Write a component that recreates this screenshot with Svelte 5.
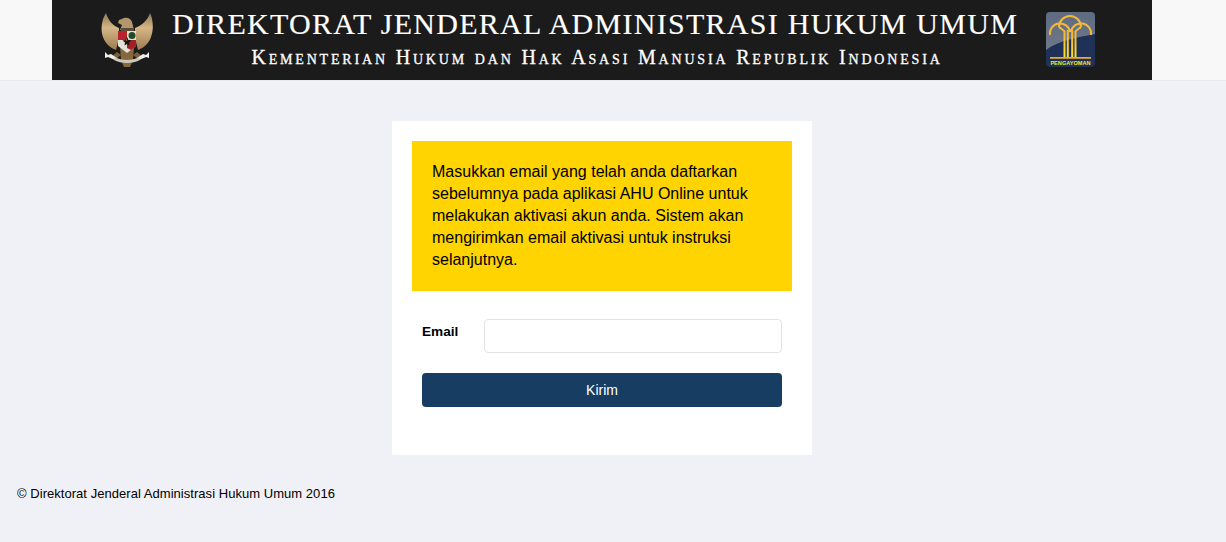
<script>
  let email = $state('');
</script>

<header class="topbar">
  <div class="banner">
    <svg class="garuda" viewBox="0 0 52 58" aria-hidden="true">
      <defs>
        <linearGradient id="wing" x1="0" y1="0" x2="0" y2="1">
          <stop offset="0" stop-color="#8a7452" />
          <stop offset="0.4" stop-color="#d6b686" />
          <stop offset="1" stop-color="#9c7c50" />
        </linearGradient>
      </defs>
      <path d="M5 2C1 8-1 18 2 26c2 6 7 11 13 13l3-12V17C12 15 7 9 5 2z" fill="url(#wing)" />
      <path d="M49 2c3 6 4 16 1 24-2 6-7 11-13 13l-3-12V17c6-2 13-8 15-15z" fill="url(#wing)" />
      <path d="M18 9l5-2c4-1 7 1 8 4l2 8H19l2-5-4-2z" fill="#b3976c" />
      <path d="M20 17h13v5H20z" fill="#5b4c39" />
      <path d="M19 36h14l-1 13-3 7h-6l-3-7z" fill="#85683d" />
      <path d="M16 41l-6 5 5 2 5-4zM36 41l6 5-5 2-5-4z" fill="#7a5f3a" />
      <path d="M17 20h18v15l-9 7-9-7z" fill="#e6e1d8" />
      <path d="M17 20h9v9h-9z" fill="#b8222a" />
      <path d="M26 29h9v6l-5 4-4-2z" fill="#a81d24" />
      <circle cx="31" cy="24.500" r="3.500" fill="#1f4d2c" />
      <path d="M26 26l1.500 3 3 .5-2.500 2 .5 3-2.500-1.500-2.500 1.500.5-3-2.500-2 3-.5z" fill="#1a1510" />
      <path d="M25.500 28l.8 1.600h-1.600z" fill="#e4c24a" />
      <path d="M4 41l3 3 3-1 6 4-2 2-7-3-3 1zM48 41l-3 3-3-1-6 4 2 2 7-3 3 1z" fill="#f2efe8" />
      <path d="M14 46c6 4 18 4 24 0l1 3c-7 4-19 4-26 0z" fill="#cfc8ba" />
    </svg>

    <div class="titles">
      <div class="title">DIREKTORAT JENDERAL ADMINISTRASI HUKUM UMUM</div>
      <div class="subtitle">Kementerian Hukum dan Hak Asasi Manusia Republik Indonesia</div>
    </div>

    <div class="badge">
      <svg viewBox="0 0 49 55" aria-hidden="true">
        <defs>
          <linearGradient id="gold" x1="0" y1="0" x2="0" y2="1">
            <stop offset="0" stop-color="#f2b23a" />
            <stop offset="1" stop-color="#fde22a" />
          </linearGradient>
          <linearGradient id="sheen" x1="0" y1="0" x2="0" y2="1">
            <stop offset="0" stop-color="#5e6b80" />
            <stop offset="1" stop-color="#6f7888" />
          </linearGradient>
        </defs>
        <rect width="49" height="55" rx="4" fill="#1f3156" />
        <path d="M4 0h41a4 4 0 0 1 4 4v18C34 25 13 28 0 38V4a4 4 0 0 1 4-4z" fill="url(#sheen)" />
        <g fill="none" stroke="#f4b93a" stroke-width="2">
          <path d="M13 15a11 11 0 0 1 22 0" />
          <path d="M4 23a10 10 0 0 1 20-3M45 23a10 10 0 0 0-20-3" />
          <path d="M13 15c2 2 4 2 6 5M35 15c-2 2-4 2-6 5" />
        </g>
        <path d="M17.500 20h2v25h-2zM20.800 18h2v27h-2zM25.200 18h2v27h-2zM28.500 20h2v25h-2z" fill="url(#gold)" />
        <path d="M4 45h41v1.800H4z" fill="#f3a92f" />
        <text class="badge-label" x="24.500" y="52.500" text-anchor="middle">PENGAYOMAN</text>
      </svg>
    </div>
  </div>
</header>

<main class="page">
  <section class="card">
    <div class="notice">
      Masukkan email yang telah anda daftarkan sebelumnya pada aplikasi AHU Online untuk melakukan aktivasi akun anda. Sistem akan mengirimkan email aktivasi untuk instruksi selanjutnya.
    </div>

    <form class="form" onsubmit={(e) => e.preventDefault()}>
      <div class="field">
        <label for="email">Email</label>
        <input id="email" type="email" bind:value={email} />
      </div>
      <button type="submit">Kirim</button>
    </form>
  </section>
</main>

<footer class="footer">© Direktorat Jenderal Administrasi Hukum Umum 2016</footer>

<style>
  :global(body) {
    background: #f0f1f7;
    color: #000;
    font-family: "Liberation Sans", Arial, sans-serif;
    font-size: 14px;
  }

  .topbar {
    background: #f8f8f8;
    border-bottom: 1px solid #e9eaee;
  }

  .banner {
    box-sizing: border-box;
    width: 1100px;
    height: 80px;
    margin-left: 52px;
    padding: 12px 57px 0 49px;
    background: #1b1b1b;
    display: flex;
    align-items: flex-start;
  }

  .garuda {
    width: 52px;
    height: 58px;
    flex: none;
    margin-top: -1px;
  }

  .titles {
    flex: 1;
    min-width: 0;
    margin-top: -6px;
    padding-right: 9px;
    color: #fff;
    font-family: "Liberation Serif", serif;
    text-align: center;
    white-space: nowrap;
  }

  .title {
    font-size: 30px;
    line-height: 36px;
    letter-spacing: 1.28px;
    -webkit-text-stroke: 0.15px #fff;
  }

  .subtitle {
    margin-top: 4px;
    padding-left: 4px;
    font-size: 20px;
    line-height: 22px;
    font-variant: small-caps;
    letter-spacing: 2.82px;
    -webkit-text-stroke: 0.3px #fff;
  }

  .badge {
    flex: none;
    width: 49px;
    height: 55px;
  }

  .badge svg {
    display: block;
    width: 49px;
    height: 55px;
  }

  .badge-label {
    font-family: "Liberation Sans", Arial, sans-serif;
    font-size: 5.600px;
    font-weight: bold;
    fill: #f5e82a;
  }

  .page {
    display: flex;
    justify-content: center;
    padding: 40px 22px 0 0;
  }

  .card {
    box-sizing: border-box;
    width: 420px;
    height: 334px;
    padding: 20px;
    background: #fff;
  }

  .notice {
    box-sizing: border-box;
    height: 150px;
    padding: 20px;
    background: #ffd400;
    font-size: 16px;
    line-height: 22px;
  }

  .form {
    padding: 28px 10px 0;
  }

  .field {
    display: flex;
    justify-content: space-between;
    align-items: flex-start;
    margin-bottom: 20px;
  }

  label {
    font-size: 13.600px;
    font-weight: bold;
    line-height: 25px;
  }

  input {
    box-sizing: border-box;
    width: 298px;
    height: 34px;
    padding: 6px 12px;
    background: #fff;
    border: 1px solid #e3e3e6;
    border-radius: 4px;
    outline: none;
  }

  button {
    display: block;
    width: 100%;
    height: 34px;
    padding: 0;
    background: #183d63;
    border: none;
    border-radius: 4px;
    color: #fff;
    font-family: inherit;
    font-size: 14px;
    cursor: pointer;
  }

  .footer {
    padding: 30px 17px 0;
    font-size: 13px;
    line-height: 17px;
    letter-spacing: 0.04px;
  }
</style>
